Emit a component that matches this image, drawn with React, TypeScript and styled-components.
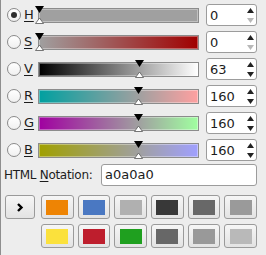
import React from "react";
import styled, { createGlobalStyle } from "styled-components";

const Global = createGlobalStyle`
  html, body { margin: 0; padding: 0; background: #ededed; }
  body { font-family: "DejaVu Sans", "Noto Sans", sans-serif; }
`;

const Panel = styled.div`
  width: 266px;
  height: 255px;
  box-sizing: border-box;
  border-left: 1px solid #8e8e8e;
  background: #ededed;
  padding: 4px 9px 0 6px;
  display: flex;
  flex-direction: column;
  font-family: "DejaVu Sans", sans-serif;
  color: #1c1c1c;
`;

const Rows = styled.div`
  display: grid;
  grid-template-rows: repeat(6, 22px);
  row-gap: 5px;
`;

const Row = styled.div`
  display: grid;
  grid-template-columns: 14px 17px 161px 51px;
  align-items: center;
`;

const Radio = styled.div<{ $checked?: boolean }>`
  width: 14px;
  height: 14px;
  box-sizing: border-box;
  border-radius: 50%;
  border: 1px solid #8a8a8a;
  background: linear-gradient(#ffffff, #f0f0f0);
  display: flex;
  align-items: center;
  justify-content: center;
  &::after {
    content: "";
    display: ${(p) => (p.$checked ? "block" : "none")};
    width: 6px;
    height: 6px;
    border-radius: 50%;
    background: #2e2e2e;
  }
`;

const Letter = styled.span`
  font-size: 13px;
  text-decoration: underline;
  text-underline-offset: 2px;
  padding-left: 3px;
  line-height: 22px;
`;

const Track = styled.div<{ $bg: string }>`
  position: relative;
  height: 15px;
  box-sizing: border-box;
  border: 1px solid #8c8c8c;
  background: ${(p) => p.$bg};
  margin-top: 1px;
  &::before {
    content: "";
    position: absolute;
    inset: 0;
    border: 1px solid rgba(255, 255, 255, 0.35);
  }
`;

const Marker = styled.svg`
  position: absolute;
  top: -3px;
  width: 9px;
  height: 19px;
  overflow: visible;
`;

const Spin = styled.div`
  width: 51px;
  height: 22px;
  box-sizing: border-box;
  border: 1px solid #9c9c9c;
  border-radius: 3px;
  background: #ffffff;
  display: flex;
  align-items: center;
  margin-left: 7px;
`;

const SpinValue = styled.span`
  flex: 1;
  font-size: 13px;
  padding-left: 3px;
`;

const SpinArrows = styled.div`
  width: 10px;
  height: 20px;
  display: flex;
  flex-direction: column;
  justify-content: space-around;
  align-items: center;
  margin-right: 1px;
`;

const Arrow = styled.svg`
  width: 7px;
  height: 5px;
`;

const HtmlRow = styled.div`
  display: flex;
  align-items: center;
  height: 22px;
  margin-top: 3px;
  margin-left: -3px;
`;

const HtmlLabel = styled.span`
  font-size: 12px;
  letter-spacing: -0.3px;
  white-space: nowrap;
  flex: 0 0 97px;
  & u { text-decoration: underline; text-underline-offset: 2px; }
`;

const HtmlInput = styled.div`
  flex: 1;
  height: 22px;
  box-sizing: border-box;
  border: 1px solid #9c9c9c;
  border-radius: 3px;
  background: #fff;
  font-size: 13px;
  line-height: 20px;
  padding-left: 3px;
`;

const Buttons = styled.div`
  display: grid;
  grid-template-columns: 32px repeat(6, 1fr);
  grid-template-rows: 24px 24px;
  column-gap: 4px;
  row-gap: 5px;
  margin-top: 9px;
  margin-left: -2px;
  & > :first-child { margin-right: 2px; }
`;

const Btn = styled.div`
  box-sizing: border-box;
  border: 1px solid #9a9a9a;
  border-radius: 3px;
  background: linear-gradient(#f6f6f6, #e3e3e3);
  display: flex;
  align-items: center;
  justify-content: center;
`;

const Swatch = styled.div<{ $c: string }>`
  width: 22px;
  height: 15px;
  background: ${(p) => p.$c};
`;

const Spacer = styled.div``;

type RowDef = {
  l: string;
  checked?: boolean;
  bg: string;
  pos: number;
  value: string;
  atMin?: boolean;
};

const rows: RowDef[] = [
  { l: "H", checked: true, bg: "#a0a0a0", pos: 0, value: "0", atMin: true },
  { l: "S", bg: "linear-gradient(to right, #a0a0a0, #a00000)", pos: 0, value: "0", atMin: true },
  { l: "V", bg: "linear-gradient(to right, #000000, #ffffff)", pos: 0.63, value: "63" },
  { l: "R", bg: "linear-gradient(to right, #00a0a0, #ffa0a0)", pos: 160 / 255, value: "160" },
  { l: "G", bg: "linear-gradient(to right, #a000a0, #a0ffa0)", pos: 160 / 255, value: "160" },
  { l: "B", bg: "linear-gradient(to right, #a0a000, #a0a0ff)", pos: 160 / 255, value: "160" },
];

const row1 = ["#ee8404", "#4a78c2", "#b0b0b0", "#383838", "#686868", "#9a9a9a"];
const row2 = ["#fbe13c", "#be1e2d", "#1fa01f", "#676767", "#999999", "#b9b9b9"];

export default function App() {
  return (
    <>
      <Global />
      <Panel>
        <Rows>
          {rows.map((r) => (
            <Row key={r.l}>
              <Radio $checked={r.checked} />
              <Letter>{r.l}</Letter>
              <Track $bg={r.bg}>
                <Marker style={{ left: `${r.pos * 159 - 4.5}px` }} viewBox="0 0 9 19">
                  <polygon points="0,0 9,0 4.5,7" fill="#000" />
                  <polygon points="4.5,12 8.5,17.5 0.5,17.5" fill="#fff" stroke="#555" strokeWidth="0.8" />
                </Marker>
              </Track>
              <Spin>
                <SpinValue>{r.value}</SpinValue>
                <SpinArrows>
                  <Arrow viewBox="0 0 7 5">
                    <polygon points="3.5,0 7,5 0,5" fill="#222" />
                  </Arrow>
                  <Arrow viewBox="0 0 7 5">
                    <polygon points="0,0 7,0 3.5,5" fill={r.atMin ? "#b8b8b8" : "#222"} />
                  </Arrow>
                </SpinArrows>
              </Spin>
            </Row>
          ))}
        </Rows>
        <HtmlRow>
          <HtmlLabel>
            HTML <u>N</u>otation:
          </HtmlLabel>
          <HtmlInput>a0a0a0</HtmlInput>
        </HtmlRow>
        <Buttons>
          <Btn>
            <svg width="8" height="9" viewBox="0 0 8 9">
              <polyline points="2,1 5.5,4.5 2,8" fill="none" stroke="#000" strokeWidth="2.4" />
            </svg>
          </Btn>
          {row1.map((c) => (
            <Btn key={c}>
              <Swatch $c={c} />
            </Btn>
          ))}
          <Spacer />
          {row2.map((c) => (
            <Btn key={c}>
              <Swatch $c={c} />
            </Btn>
          ))}
        </Buttons>
      </Panel>
    </>
  );
}
